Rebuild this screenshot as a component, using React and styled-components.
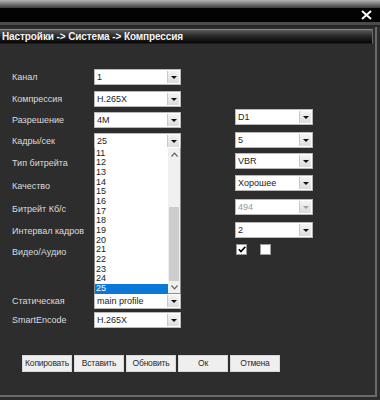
import React from "react";
import styled, { createGlobalStyle } from "styled-components";

const Global = createGlobalStyle`
  html, body { margin: 0; padding: 0; background: #2c2c2c; }
  body { font-family: "Liberation Sans", Arial, sans-serif; }
`;

const Frame = styled.div`
  width: 380px;
  height: 400px;
  background: #2d2d2d;
  display: flex;
  flex-direction: column;
  position: relative;
  overflow: hidden;
`;

const TopStrip = styled.div`
  height: 8px;
  background: linear-gradient(#b4b4b4, #6a6a6a 60%, #3a3a3a);
`;

const Caption = styled.div`
  height: 14px;
  background: #030303;
  display: flex;
  justify-content: flex-end;
  align-items: center;
  padding-right: 8px;
`;

const Sep = styled.div`
  height: 3px;
  background: #4b4b4b;
  border-bottom: 2px solid #262626;
`;

const Main = styled.div`
  flex: 1;
  display: flex;
  flex-direction: column;
  margin-right: 3px;
  border-right: 2px solid #6a6a6a;
  border-bottom: 2px solid #6a6a6a;
  margin-bottom: 3px;
  position: relative;
`;

const TitleBar = styled.div`
  height: 13px;
  margin-top: 2px;
  margin-right: 2px;
  border-top: 1px solid #8a8a8a;
  border-bottom: 1px solid #1a1a1a;
  border-right: 1px solid #6a6a6a;
  background: linear-gradient(#5a5a5a, #2a2a2a 45%, #050505);
  color: #f4f4f4;
  font-weight: bold;
  font-size: 10px;
  line-height: 13px;
  padding-left: 2px;
  letter-spacing: -0.1px;
`;

const Form = styled.div`
  padding: 25px 0 0 12px;
  display: grid;
  grid-template-columns: 82px 87px 132px;
  grid-template-rows: 22px 21px 21px 22px 23px 23px 22px 21px 16px;
  align-items: start;
`;

const Label = styled.div`
  color: #dcdcdc;
  font-size: 9px;
  line-height: 16px;
  white-space: nowrap;
  grid-column: 1;
`;

const Box = styled.div`
  width: ${p => p.$w || 87}px;
  height: 16px;
  box-sizing: border-box;
  background: #fff;
  border: 1px solid #b8b8b8;
  display: flex;
  align-items: stretch;
  font-size: 9px;
  color: ${p => (p.$disabled ? "#9a9a9a" : "#222")};
  margin-top: ${p => p.$dy || 0}px;
  margin-left: ${p => p.$ml || 0}px;
`;

const BoxText = styled.span`
  flex: 1;
  padding-left: 2px;
  line-height: 14px;
  white-space: nowrap;
  overflow: hidden;
`;

const Arrow = styled.span`
  width: 11px;
  background: linear-gradient(#f4f4f4, #dcdcdc);
  border-left: 1px solid #c8c8c8;
  margin: 1px;
  display: flex;
  align-items: center;
  justify-content: center;
  &::after {
    content: "";
    border-left: 3px solid transparent;
    border-right: 3px solid transparent;
    border-top: 3px solid ${p => (p.$disabled ? "#a0a0a0" : "#111")};
    margin-top: 1px;
  }
`;

const Checks = styled.div`
  display: flex;
  gap: 13px;
  margin-left: 55px;
`;

const Check = styled.div`
  width: 9px;
  height: 9px;
  background: #fff;
  border: 1px solid #9a9a9a;
  display: flex;
  align-items: center;
  justify-content: center;
`;

const Lower = styled.div`
  padding-left: 12px;
  margin-top: 33px;
  display: grid;
  grid-template-columns: 82px 87px;
  grid-auto-rows: 19px;
`;

const Buttons = styled.div`
  display: flex;
  gap: 2px;
  padding-left: 22px;
  margin-top: 24px;
`;

const Btn = styled.div`
  width: 50px;
  height: 17px;
  box-sizing: border-box;
  background: #efefef;
  border: 1px solid #d8d8d8;
  color: #2a2a2a;
  font-size: 8.5px;
  line-height: 15px;
  text-align: center;
  white-space: nowrap;
  letter-spacing: -0.2px;
`;

const List = styled.div`
  position: absolute;
  left: 94px;
  top: 148px;
  width: 87px;
  height: 146px;
  box-sizing: border-box;
  background: #fff;
  border: 1px solid #8c8c8c;
  border-top: none;
  display: flex;
`;

const Items = styled.div`
  flex: 1;
  padding-top: 0.5px;
`;

const Item = styled.div`
  height: 9.7px;
  line-height: 9.7px;
  font-size: 9px;
  padding-left: 1px;
  color: ${p => (p.$sel ? "#fff" : "#1a1a1a")};
  background: ${p => (p.$sel ? "#0a78d6" : "transparent")};
`;

const Scroll = styled.div`
  width: 12px;
  background: #f0f0f0;
  display: flex;
  flex-direction: column;
  align-items: center;
`;

const ScrollBtn = styled.div`
  height: 12px;
  display: flex;
  align-items: center;
  justify-content: center;
`;

const Track = styled.div`
  flex: 1;
  width: 100%;
  display: flex;
  flex-direction: column;
  justify-content: flex-end;
`;

const Thumb = styled.div`
  height: 74px;
  margin: 0 1px;
  background: #cdcdcd;
`;

const Select = ({ value, disabled, dy, right }) => (
  <Box $disabled={disabled} $dy={dy} $w={right ? 78 : 87} $ml={right ? 54 : 0}>
    <BoxText>{value}</BoxText>
    <Arrow $disabled={disabled} />
  </Box>
);

const Chev = ({ up }) => (
  <svg width="7" height="5" viewBox="0 0 7 5">
    <path d={up ? "M0.5 4.5 L3.5 1.2 L6.5 4.5" : "M0.5 0.5 L3.5 3.8 L6.5 0.5"} fill="none" stroke="#606060" strokeWidth="1.2" />
  </svg>
);

export default function App() {
  const nums = [];
  for (let i = 11; i <= 25; i++) nums.push(i);
  return (
    <>
      <Global />
      <Frame>
        <TopStrip />
        <Caption>
          <svg width="11" height="10" viewBox="0 0 11 10">
            <path d="M1 1 L10 9 M10 1 L1 9" stroke="#fff" strokeWidth="2" />
          </svg>
        </Caption>
        <Sep />
        <Main>
          <TitleBar>Настройки -&gt; Система -&gt; Компрессия</TitleBar>
          <Form>
            <Label>Канал</Label>
            <Select value="1" />
            <div />
            <Label>Компрессия</Label>
            <Select value="H.265X" />
            <div />
            <Label>Разрешение</Label>
            <Select value="4M" />
            <Select value="D1" dy={-3} right />
            <Label>Кадры/сек</Label>
            <Select value="25" />
            <Select value="5" dy={-1} right />
            <Label>Тип битрейта</Label>
            <div />
            <Select value="VBR" dy={-2} right />
            <Label>Качество</Label>
            <div />
            <Select value="Хорошее" dy={-3} right />
            <Label>Битрейт Кб/с</Label>
            <div />
            <Select value="494" dy={-2} disabled right />
            <Label>Интервал кадров</Label>
            <div />
            <Select value="2" dy={-1} right />
            <Label>Видео/Аудио</Label>
            <div />
            <Checks>
              <Check>
                <svg width="8" height="7" viewBox="0 0 8 7">
                  <path d="M0.8 3.3 L3 5.6 L7.3 0.8" fill="none" stroke="#000" strokeWidth="1.6" />
                </svg>
              </Check>
              <Check />
            </Checks>
          </Form>
          <Lower>
            <Label>Статическая</Label>
            <Select value="main profile" />
            <Label>SmartEncode</Label>
            <Select value="H.265X" />
          </Lower>
          <Buttons>
            <Btn>Копировать</Btn>
            <Btn>Вставить</Btn>
            <Btn>Обновить</Btn>
            <Btn>Ок</Btn>
            <Btn>Отмена</Btn>
          </Buttons>
        </Main>
        <List>
          <Items>
            {nums.map(n => (
              <Item key={n} $sel={n === 25}>{n}</Item>
            ))}
          </Items>
          <Scroll>
            <ScrollBtn><Chev up /></ScrollBtn>
            <Track><Thumb /></Track>
            <ScrollBtn><Chev /></ScrollBtn>
          </Scroll>
        </List>
      </Frame>
    </>
  );
}
